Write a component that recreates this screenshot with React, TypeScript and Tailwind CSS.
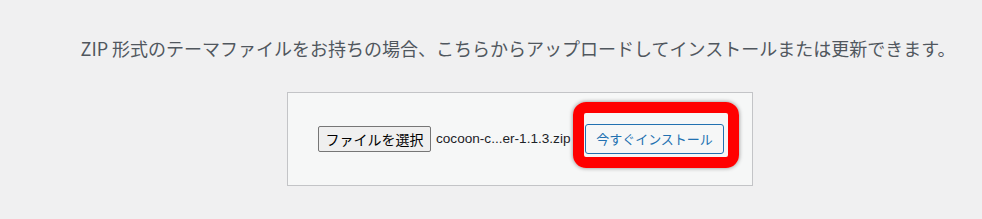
import React from 'react';

const jp = '"Noto Sans CJK JP", "Liberation Sans", sans-serif';

export default function App() {
  return (
    <div className="w-[982px] h-[219px] bg-[#f0f0f1] overflow-hidden pl-[58px]" style={{ fontFamily: jp }}>
      <p className="pt-[35px] pr-[4px] text-center text-[18px] leading-[26px] text-[#50575e]">
        ZIP 形式のテーマファイルをお持ちの場合、こちらからアップロードしてインストールまたは更新できます。
      </p>

      <div className="flex justify-center mt-[31px]">
        <form className="w-[466px] h-[94px] flex items-center justify-between pl-[30px] pr-[28px] bg-[#f6f7f7] border border-[#c3c4c7]">
          <div className="flex items-center">
            <span className="h-[26px] w-[113px] flex items-center justify-center rounded-[2px] border border-[#767676] bg-[#efefef] text-[14px] text-black">
              ファイルを選択
            </span>
            <span className="ml-[5px] text-[13.6px] text-[#1d2327]" style={{ fontFamily: '"Liberation Sans", sans-serif' }}>
              cocoon-c...er-1.1.3.zip
            </span>
          </div>

          <div className="relative">
            <span className="h-[30px] w-[139px] flex items-center justify-center rounded-[3px] border border-[#2271b1] bg-[#f6f7f7] text-[13px] text-[#2271b1]">
              今すぐインストール
            </span>
            <div className="absolute left-[-12px] top-[-22px] w-[166px] h-[66px] rounded-[13px] border-[11px] border-[#ff0000] shadow-[0_0_4px_rgba(0,0,0,0.45)]" />
          </div>
        </form>
      </div>
    </div>
  );
}
